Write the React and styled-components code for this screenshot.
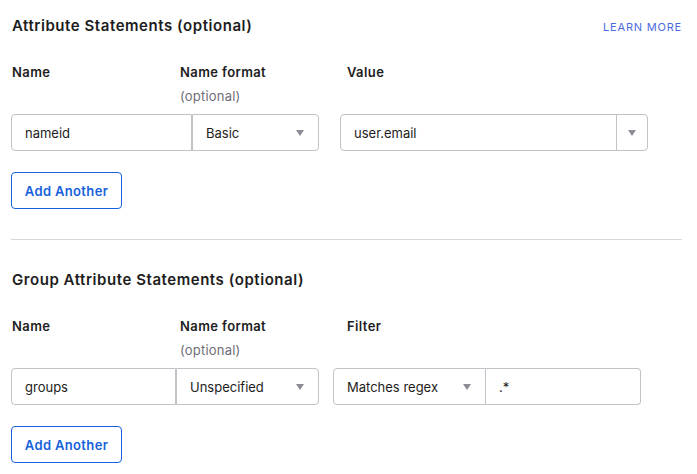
import React from 'react'
import styled, { createGlobalStyle } from 'styled-components'

const Global = createGlobalStyle`
  body {
    margin: 0;
    background: #fff;
    font-family: Inter, "Noto Sans", sans-serif;
    color: #1d1d21;
  }
`

const Page = styled.div`
  padding: 14px 15px 0 11px;
`

const Section = styled.section`
  padding-bottom: ${p => p.$last ? '0' : '30px'};
  border-bottom: ${p => p.$last ? 'none' : '1px solid #d7d7dc'};
  margin-bottom: ${p => p.$last ? '0' : '28px'};
`

const Header = styled.div`
  display: flex;
  justify-content: space-between;
  align-items: baseline;
  height: 24px;
  padding-left: 1px;
`

const Title = styled.h2`
  margin: 0;
  font-size: 15px;
  font-weight: 600;
  letter-spacing: 0.55px;
  line-height: 24px;
`

const Learn = styled.a`
  font-size: 11px;
  letter-spacing: 0.8px;
  color: #4b6be0;
  text-decoration: none;
`

const Labels = styled.div`
  display: grid;
  grid-template-columns: 168px 167px 1fr;
  margin-top: 22px;
  padding-left: 1px;
`

const Label = styled.div`
  font-size: 13px;
  font-weight: 600;
  letter-spacing: 0.4px;
  line-height: 24px;
`

const Hint = styled.div`
  font-size: 13px;
  color: #6e6e78;
  letter-spacing: 0.2px;
  line-height: 24px;
`

const Row = styled.div`
  display: flex;
  align-items: center;
  margin-top: 6px;
`

const Group = styled.div`
  display: flex;
  margin-left: ${p => p.$gap || 0}px;
`

const Field = styled.div`
  width: ${p => p.$w}px;
  height: 37px;
  box-sizing: border-box;
  border: 1px solid #c1c1c8;
  border-left-width: ${p => p.$joined ? 0 : 1}px;
  border-radius: ${p => p.$first ? '4px 0 0 4px' : p.$end ? '0 4px 4px 0' : '4px'};
  display: flex;
  align-items: center;
  padding: 0 ${p => p.$pr ?? 14}px 0 13px;
  font-size: 13px;
  color: #1d1d21;
  background: #fff;
`

const Text = styled.span`
  flex: 1;
`

const Trigger = styled.span`
  width: 30px;
  align-self: stretch;
  border-left: 1px solid #c1c1c8;
  display: flex;
  align-items: center;
  justify-content: center;
`

const Caret = styled.span`
  width: 0;
  height: 0;
  border-left: 4px solid transparent;
  border-right: 4px solid transparent;
  border-top: 6px solid #8c8c96;
`

const Button = styled.button`
  margin-top: 21px;
  height: 37px;
  width: 111px;
  border: 1px solid #1662dd;
  border-radius: 4px;
  background: #fff;
  color: #1662dd;
  font-family: inherit;
  font-size: 13px;
  font-weight: 600;
  letter-spacing: 0.35px;
  padding: 0;
`

const Select = ({ w, children, first, end }) => (
  <Field $w={w} $first={first} $end={end}>
    <Text>{children}</Text>
    <Caret />
  </Field>
)

export default function App() {
  return (
    <Page>
      <Global />
      <Section>
        <Header>
          <Title>Attribute Statements (optional)</Title>
          <Learn href="#">LEARN MORE</Learn>
        </Header>
        <Labels>
          <Label>Name</Label>
          <div>
            <Label>Name format</Label>
            <Hint>(optional)</Hint>
          </div>
          <Label>Value</Label>
        </Labels>
        <Row>
          <Group>
            <Field $w={181} $first>nameid</Field>
            <Select w={127} end>Basic</Select>
          </Group>
          <Group $gap={21}>
            <Field $w={308} $pr={0}>
              <Text>user.email</Text>
              <Trigger>
                <Caret />
              </Trigger>
            </Field>
          </Group>
        </Row>
        <Button>Add Another</Button>
      </Section>
      <Section $last>
        <Header>
          <Title>Group Attribute Statements (optional)</Title>
        </Header>
        <Labels>
          <Label>Name</Label>
          <div>
            <Label>Name format</Label>
            <Hint>(optional)</Hint>
          </div>
          <Label>Filter</Label>
        </Labels>
        <Row>
          <Group>
            <Field $w={165} $first>groups</Field>
            <Select w={143} end>Unspecified</Select>
          </Group>
          <Group $gap={14}>
            <Select w={153} first>Matches regex</Select>
            <Field $w={155} $end $joined>.*</Field>
          </Group>
        </Row>
        <Button>Add Another</Button>
      </Section>
    </Page>
  )
}
